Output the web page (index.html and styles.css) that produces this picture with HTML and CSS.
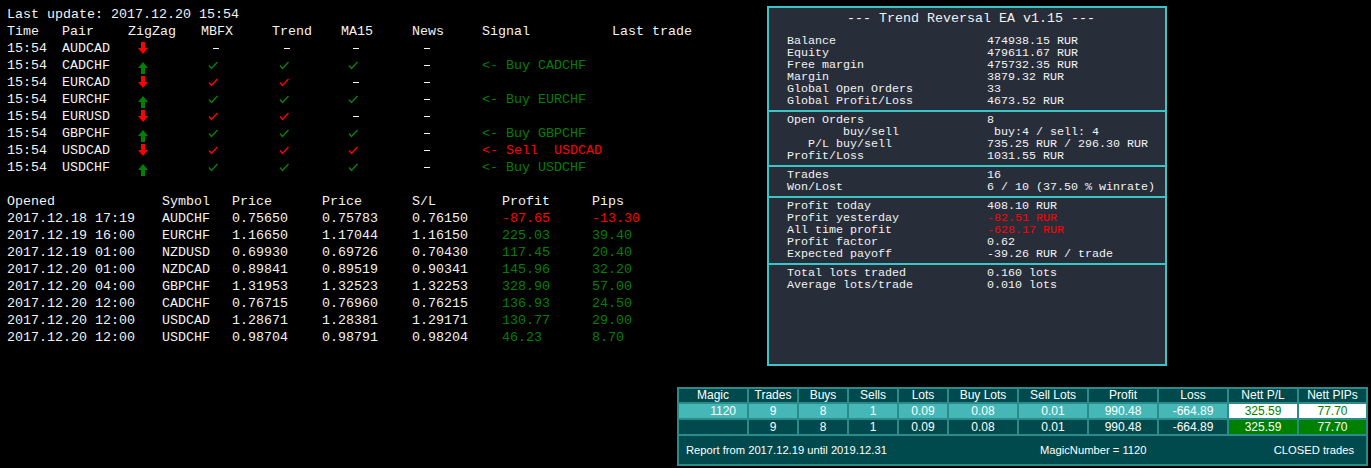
FILE: index.html
```html
<!DOCTYPE html>
<html lang="en">
<head>
    <meta charset="UTF-8">
    <title>Trend Reversal EA</title>
    <link rel="stylesheet" href="styles.css">
</head>
<body>
    <div class="top">
        <div class="monitor">
            <div class="line">Last update: 2017.12.20 15:54</div>
            <div class="sig-row">
                <span>Time</span><span>Pair</span><span>ZigZag</span><span>MBFX</span><span>Trend</span><span>MA15</span><span>News</span><span>Signal</span><span>Last trade</span>
            </div>
            <div class="sig-row">
                <span>15:54</span><span>AUDCAD</span>
                <span class="arrow"><svg class="down" viewBox="0 0 10 12" width="10" height="12"><path d="M3 0h4v6h3l-5 6-5-6h3z"/></svg></span>
                <span class="dash"><i></i></span><span class="dash"><i></i></span><span class="dash"><i></i></span><span class="dash"><i></i></span>
                <span></span><span></span>
            </div>
            <div class="sig-row">
                <span>15:54</span><span>CADCHF</span>
                <span class="arrow"><svg class="up" viewBox="0 0 10 12" width="10" height="12"><path d="M5 0l5 6H7v6H3V6H0z"/></svg></span>
                <span class="check green"><svg viewBox="0 0 10 9" width="10" height="9"><path d="M1 4.5l2.5 3L9.5 1"/></svg></span>
                <span class="check green"><svg viewBox="0 0 10 9" width="10" height="9"><path d="M1 4.5l2.5 3L9.5 1"/></svg></span>
                <span class="check green"><svg viewBox="0 0 10 9" width="10" height="9"><path d="M1 4.5l2.5 3L9.5 1"/></svg></span>
                <span class="dash"><i></i></span>
                <span class="buy">&lt;- Buy CADCHF</span><span></span>
            </div>
            <div class="sig-row">
                <span>15:54</span><span>EURCAD</span>
                <span class="arrow"><svg class="down" viewBox="0 0 10 12" width="10" height="12"><path d="M3 0h4v6h3l-5 6-5-6h3z"/></svg></span>
                <span class="check red"><svg viewBox="0 0 10 9" width="10" height="9"><path d="M1 4.5l2.5 3L9.5 1"/></svg></span>
                <span class="check red"><svg viewBox="0 0 10 9" width="10" height="9"><path d="M1 4.5l2.5 3L9.5 1"/></svg></span>
                <span class="dash"><i></i></span><span class="dash"><i></i></span>
                <span></span><span></span>
            </div>
            <div class="sig-row">
                <span>15:54</span><span>EURCHF</span>
                <span class="arrow"><svg class="up" viewBox="0 0 10 12" width="10" height="12"><path d="M5 0l5 6H7v6H3V6H0z"/></svg></span>
                <span class="check green"><svg viewBox="0 0 10 9" width="10" height="9"><path d="M1 4.5l2.5 3L9.5 1"/></svg></span>
                <span class="check green"><svg viewBox="0 0 10 9" width="10" height="9"><path d="M1 4.5l2.5 3L9.5 1"/></svg></span>
                <span class="check green"><svg viewBox="0 0 10 9" width="10" height="9"><path d="M1 4.5l2.5 3L9.5 1"/></svg></span>
                <span class="dash"><i></i></span>
                <span class="buy">&lt;- Buy EURCHF</span><span></span>
            </div>
            <div class="sig-row">
                <span>15:54</span><span>EURUSD</span>
                <span class="arrow"><svg class="down" viewBox="0 0 10 12" width="10" height="12"><path d="M3 0h4v6h3l-5 6-5-6h3z"/></svg></span>
                <span class="check red"><svg viewBox="0 0 10 9" width="10" height="9"><path d="M1 4.5l2.5 3L9.5 1"/></svg></span>
                <span class="check red"><svg viewBox="0 0 10 9" width="10" height="9"><path d="M1 4.5l2.5 3L9.5 1"/></svg></span>
                <span class="dash"><i></i></span><span class="dash"><i></i></span>
                <span></span><span></span>
            </div>
            <div class="sig-row">
                <span>15:54</span><span>GBPCHF</span>
                <span class="arrow"><svg class="up" viewBox="0 0 10 12" width="10" height="12"><path d="M5 0l5 6H7v6H3V6H0z"/></svg></span>
                <span class="check green"><svg viewBox="0 0 10 9" width="10" height="9"><path d="M1 4.5l2.5 3L9.5 1"/></svg></span>
                <span class="check green"><svg viewBox="0 0 10 9" width="10" height="9"><path d="M1 4.5l2.5 3L9.5 1"/></svg></span>
                <span class="check green"><svg viewBox="0 0 10 9" width="10" height="9"><path d="M1 4.5l2.5 3L9.5 1"/></svg></span>
                <span class="dash"><i></i></span>
                <span class="buy">&lt;- Buy GBPCHF</span><span></span>
            </div>
            <div class="sig-row">
                <span>15:54</span><span>USDCAD</span>
                <span class="arrow"><svg class="down" viewBox="0 0 10 12" width="10" height="12"><path d="M3 0h4v6h3l-5 6-5-6h3z"/></svg></span>
                <span class="check red"><svg viewBox="0 0 10 9" width="10" height="9"><path d="M1 4.5l2.5 3L9.5 1"/></svg></span>
                <span class="check red"><svg viewBox="0 0 10 9" width="10" height="9"><path d="M1 4.5l2.5 3L9.5 1"/></svg></span>
                <span class="check red"><svg viewBox="0 0 10 9" width="10" height="9"><path d="M1 4.5l2.5 3L9.5 1"/></svg></span>
                <span class="dash"><i></i></span>
                <span class="sell">&lt;- Sell  USDCAD</span><span></span>
            </div>
            <div class="sig-row">
                <span>15:54</span><span>USDCHF</span>
                <span class="arrow"><svg class="up" viewBox="0 0 10 12" width="10" height="12"><path d="M5 0l5 6H7v6H3V6H0z"/></svg></span>
                <span class="check green"><svg viewBox="0 0 10 9" width="10" height="9"><path d="M1 4.5l2.5 3L9.5 1"/></svg></span>
                <span class="check green"><svg viewBox="0 0 10 9" width="10" height="9"><path d="M1 4.5l2.5 3L9.5 1"/></svg></span>
                <span class="check green"><svg viewBox="0 0 10 9" width="10" height="9"><path d="M1 4.5l2.5 3L9.5 1"/></svg></span>
                <span class="dash"><i></i></span>
                <span class="buy">&lt;- Buy USDCHF</span><span></span>
            </div>

            <div class="trades">
                <div class="tr-row"><span>Opened</span><span>Symbol</span><span>Price</span><span>Price</span><span>S/L</span><span>Profit</span><span>Pips</span></div>
                <div class="tr-row"><span>2017.12.18 17:19</span><span>AUDCHF</span><span>0.75650</span><span>0.75783</span><span>0.76150</span><span class="loss">-87.65</span><span class="loss">-13.30</span></div>
                <div class="tr-row"><span>2017.12.19 16:00</span><span>EURCHF</span><span>1.16650</span><span>1.17044</span><span>1.16150</span><span class="gain">225.03</span><span class="gain">39.40</span></div>
                <div class="tr-row"><span>2017.12.19 01:00</span><span>NZDUSD</span><span>0.69930</span><span>0.69726</span><span>0.70430</span><span class="gain">117.45</span><span class="gain">20.40</span></div>
                <div class="tr-row"><span>2017.12.20 01:00</span><span>NZDCAD</span><span>0.89841</span><span>0.89519</span><span>0.90341</span><span class="gain">145.96</span><span class="gain">32.20</span></div>
                <div class="tr-row"><span>2017.12.20 04:00</span><span>GBPCHF</span><span>1.31953</span><span>1.32523</span><span>1.32253</span><span class="gain">328.90</span><span class="gain">57.00</span></div>
                <div class="tr-row"><span>2017.12.20 12:00</span><span>CADCHF</span><span>0.76715</span><span>0.76960</span><span>0.76215</span><span class="gain">136.93</span><span class="gain">24.50</span></div>
                <div class="tr-row"><span>2017.12.20 12:00</span><span>USDCAD</span><span>1.28671</span><span>1.28381</span><span>1.29171</span><span class="gain">130.77</span><span class="gain">29.00</span></div>
                <div class="tr-row"><span>2017.12.20 12:00</span><span>USDCHF</span><span>0.98704</span><span>0.98791</span><span>0.98204</span><span class="gain">46.23</span><span class="gain">8.70</span></div>
            </div>
        </div>

        <div class="panel">
            <div class="panel-title">--- Trend Reversal EA v1.15 ---</div>
            <div class="section">
                <div class="kv"><span>Balance</span><span>474938.15 RUR</span></div>
                <div class="kv"><span>Equity</span><span>479611.67 RUR</span></div>
                <div class="kv"><span>Free margin</span><span>475732.35 RUR</span></div>
                <div class="kv"><span>Margin</span><span>3879.32 RUR</span></div>
                <div class="kv"><span>Global Open Orders</span><span>33</span></div>
                <div class="kv"><span>Global Profit/Loss</span><span>4673.52 RUR</span></div>
            </div>
            <div class="section">
                <div class="kv"><span>Open Orders</span><span>8</span></div>
                <div class="kv"><span>        buy/sell</span><span> buy:4 / sell: 4</span></div>
                <div class="kv"><span>   P/L buy/sell</span><span>735.25 RUR / 296.30 RUR</span></div>
                <div class="kv"><span>Profit/Loss</span><span>1031.55 RUR</span></div>
            </div>
            <div class="section">
                <div class="kv"><span>Trades</span><span>16</span></div>
                <div class="kv"><span>Won/Lost</span><span>6 / 10 (37.50 % winrate)</span></div>
            </div>
            <div class="section">
                <div class="kv"><span>Profit today</span><span>408.10 RUR</span></div>
                <div class="kv"><span>Profit yesterday</span><span class="neg">-82.51 RUR</span></div>
                <div class="kv"><span>All time profit</span><span class="neg">-628.17 RUR</span></div>
                <div class="kv"><span>Profit factor</span><span>0.62</span></div>
                <div class="kv"><span>Expected payoff</span><span>-39.26 RUR / trade</span></div>
            </div>
            <div class="section">
                <div class="kv"><span>Total lots traded</span><span>0.160 lots</span></div>
                <div class="kv"><span>Average lots/trade</span><span>0.010 lots</span></div>
            </div>
        </div>
    </div>

    <div class="report">
        <div class="cell head">Magic</div><div class="cell head">Trades</div><div class="cell head">Buys</div><div class="cell head">Sells</div><div class="cell head">Lots</div><div class="cell head">Buy Lots</div><div class="cell head">Sell Lots</div><div class="cell head">Profit</div><div class="cell head">Loss</div><div class="cell head">Nett P/L</div><div class="cell head">Nett PIPs</div>

        <div class="cell hl magic">1120</div><div class="cell hl">9</div><div class="cell hl">8</div><div class="cell hl">1</div><div class="cell hl">0.09</div><div class="cell hl">0.08</div><div class="cell hl">0.01</div><div class="cell hl">990.48</div><div class="cell hl">-664.89</div><div class="cell nett-light">325.59</div><div class="cell nett-light">77.70</div>

        <div class="cell"></div><div class="cell">9</div><div class="cell">8</div><div class="cell">1</div><div class="cell">0.09</div><div class="cell">0.08</div><div class="cell">0.01</div><div class="cell">990.48</div><div class="cell">-664.89</div><div class="cell nett-dark">325.59</div><div class="cell nett-dark">77.70</div>

        <div class="report-foot">
            <span class="from">Report from 2017.12.19 until 2019.12.31</span>
            <span>MagicNumber = 1120</span>
            <span class="closed">CLOSED trades</span>
        </div>
    </div>
</body>
</html>
```

FILE: styles.css
```css
body {
    margin: 0;
    background: #000;
    color: #f2f2f2;
    font-family: "Liberation Mono", "Courier New", monospace;
    font-size: 13.33px;
}

.top {
    display: flex;
    align-items: flex-start;
}

.monitor {
    flex: 0 0 760px;
    padding: 6px 0 0 7px;
    line-height: 17px;
}

.sig-row {
    display: grid;
    grid-template-columns: 55px 66px 73px 71px 69px 71px 70px 130px auto;
    height: 17px;
    white-space: pre;
}

.arrow {
    padding-left: 10px;
}

.arrow svg {
    display: inline-block;
}

.down {
    fill: #ff0000;
    vertical-align: -2px;
}

.up {
    fill: #008000;
    vertical-align: -5px;
}

.check {
    padding-left: 7px;
}

.check svg {
    fill: none;
    stroke-width: 1.4;
    vertical-align: -1px;
}

.check.green svg { stroke: #0a800a; }
.check.red svg { stroke: #ff0000; }

.dash {
    padding-left: 12px;
}

.dash i {
    display: inline-block;
    width: 6px;
    height: 1px;
    background: #f2f2f2;
    vertical-align: middle;
}

.buy { color: #008000; }
.sell { color: #ff0000; }

.trades {
    margin-top: 17px;
}

.tr-row {
    display: grid;
    grid-template-columns: 155px 70px 90px 90px 90px 90px auto;
    height: 17px;
}

.loss { color: #ff0000; }
.gain { color: #008000; }

/* account panel */
.panel {
    margin-top: 6px;
    width: 400px;
    height: 360px;
    box-sizing: border-box;
    border: 2px solid #39c6c6;
    background: #272e3a;
}

.panel-title {
    padding: 3px 0 6px 8px;
    line-height: 16px;
    text-align: center;
}

.section {
    padding: 2px 0 3px 18px;
    font-size: 11.67px;
    line-height: 12px;
}

.section + .section {
    border-top: 2px solid #39c6c6;
}

.kv {
    display: grid;
    grid-template-columns: 200px auto;
    white-space: pre;
}

.neg { color: #ff0000; }

/* closed trades report */
.report {
    width: 691px;
    margin: 21px 3px 0 auto;
    box-sizing: border-box;
    padding: 2px;
    display: grid;
    grid-template-columns: 68px 48px 48px 48px 48px 68px 68px 68px 68px 68px 67px;
    grid-template-rows: 13px 14px 14px 28px;
    gap: 2px;
    background: #2a8b8b;
    font-family: "Liberation Sans", Arial, sans-serif;
    font-size: 12px;
    color: #fff;
}

.cell {
    background: #004a4d;
    text-align: center;
    line-height: 14px;
}

.cell.head {
    line-height: 13px;
}

.cell.hl {
    background: #45b7b7;
}

.cell.magic {
    text-align: right;
    padding-right: 11px;
}

.nett-light {
    background: #fff;
    color: #008000;
}

.nett-dark {
    background: #008000;
}

.report-foot {
    grid-column: 1 / -1;
    background: #004a4d;
    display: flex;
    align-items: center;
    padding: 0 12px 0 7px;
    font-size: 11.2px;
}

.from {
    flex: 0 0 354px;
}

.closed {
    margin-left: auto;
}
```
